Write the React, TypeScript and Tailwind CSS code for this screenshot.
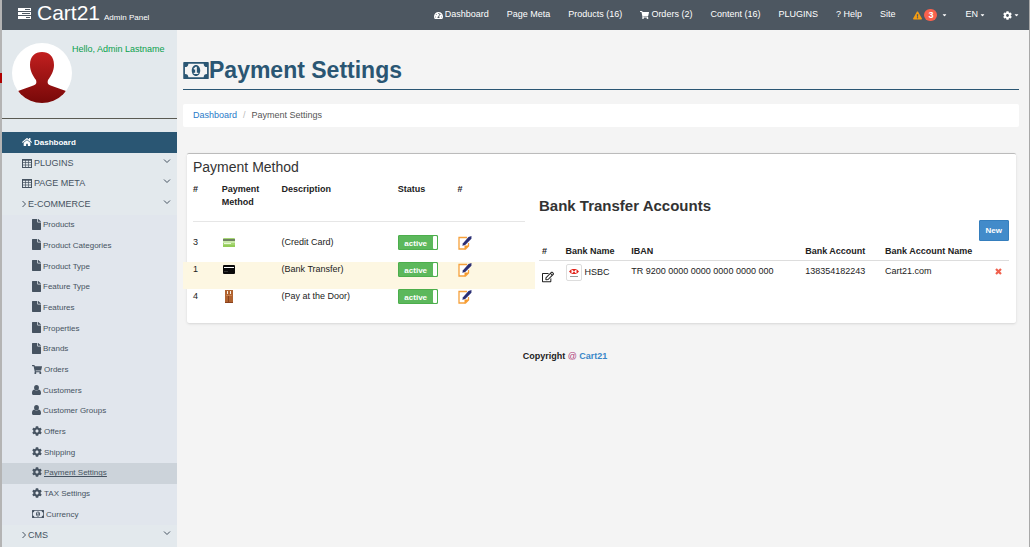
import React from 'react';
import {
  FaCaretDown,
  FaCog,
  FaExclamationTriangle,
  FaFile,
  FaHome,
  FaRegEdit,
  FaShoppingCart,
  FaTachometerAlt,
} from 'react-icons/fa';

type IconProps = { className?: string };

const ServerIcon = ({ className }: IconProps) => (
  <svg viewBox="0 0 13 11" className={className} fill="currentColor" aria-hidden="true">
    <path fillRule="evenodd" d="M0 0h13v3H0zM7 1v1h5V1zM0 4h13v3H0zM4 5v1h8V5zM0 8h13v3H0zM8 9v1h4V9z" />
  </svg>
);

const TableIcon = ({ className }: IconProps) => (
  <svg viewBox="0 0 10 9" className={className} fill="none" stroke="currentColor" strokeWidth="1" aria-hidden="true">
    <rect x="0.5" y="0.5" width="9" height="8" />
    <path strokeOpacity="0.7" d="M0 1.500h10M0 3.500h10M0 6h10M3.500 1v8M6.500 1v8" />
  </svg>
);

const MoneyIcon = ({ className }: IconProps) => (
  <svg viewBox="0 0 30 20" className={className} fill="currentColor" aria-hidden="true">
    <path
      fillRule="evenodd"
      d="M1 0h28a1 1 0 0 1 1 1v18a1 1 0 0 1-1 1H1a1 1 0 0 1-1-1V1a1 1 0 0 1 1-1zM6 2a4 4 0 0 1-4 4v8a4 4 0 0 1 4 4h18a4 4 0 0 1 4-4V6a4 4 0 0 1-4-4z"
    />
    <path fillRule="evenodd" d="M15 3.500c3 0 5 3 5 6.500s-2 6.500-5 6.500-5-3-5-6.500 2-6.500 5-6.500zM14.500 5.500L12 7.800l1.200 1.400.8-.7V12.500h-1.700V14h5.400v-1.500H16v-7z" />
  </svg>
);

const UserIcon = ({ className }: IconProps) => (
  <svg viewBox="0 0 9 10" className={className} fill="currentColor" aria-hidden="true">
    <ellipse cx="4.500" cy="2.700" rx="2.400" ry="2.700" />
    <path d="M2.200 4.600c1.300 1.400 3.300 1.400 4.600 0C8.400 4.800 9 6.300 9 8.200 9 9.300 8.400 10 7.500 10h-6C.6 10 0 9.300 0 8.200c0-1.900.6-3.400 2.200-3.600z" />
  </svg>
);

const ChevronIcon = ({ className }: IconProps) => (
  <svg viewBox="0 0 8 8" className={className} fill="none" stroke="currentColor" strokeWidth="1" aria-hidden="true">
    <path d="M1 2.500L4 5.500L7 2.500" />
  </svg>
);

const ArrowIcon = ({ className }: IconProps) => (
  <svg viewBox="0 0 4 8" className={className} fill="none" stroke="currentColor" strokeWidth="1" aria-hidden="true">
    <path d="M0.500 1L3.500 4L0.500 7" />
  </svg>
);

const CrossIcon = ({ className }: IconProps) => (
  <svg viewBox="0 0 7 7" className={className} fill="none" stroke="currentColor" strokeWidth="2.200" aria-hidden="true">
    <path d="M1 1L6 6M6 1L1 6" />
  </svg>
);

const GreenCardIcon = () => (
  <svg viewBox="0 0 12 9" className="w-3 h-[9px]" aria-hidden="true">
    <rect width="12" height="9" rx="1" fill="#a5d672" />
    <rect y="1" width="12" height="2" fill="#6f8460" />
    <rect y="3" width="12" height="2" fill="#c9e8a8" />
    <rect x="1" y="5" width="7" height="1" fill="#e9f8d8" />
    <rect y="7" width="12" height="2" fill="#93cc57" />
  </svg>
);

const BlackCardIcon = () => (
  <svg viewBox="0 0 12 9" className="w-3 h-[9px]" aria-hidden="true">
    <rect width="12" height="9" rx="1" fill="#0a0a0a" />
    <rect x="1" y="2" width="10" height="1" fill="#fff" />
    <rect x="1" y="6" width="4" height="1" fill="#333" />
  </svg>
);

const DoorIcon = () => (
  <svg viewBox="0 0 10 13" className="w-[10px] h-[13px] ml-px" aria-hidden="true">
    <path d="M1 0h8v13H1z" fill="#b0622f" />
    <path d="M3 1h1v3H3zM6 1h1v3H6z" fill="#fbeede" />
    <path d="M2 5h6v1H2z" fill="#c98250" />
    <path d="M4 6h1v6H4z" fill="#8a421d" />
    <path d="M1 12h8v1H1z" fill="#8a421d" />
  </svg>
);

const NoteIcon = () => (
  <svg viewBox="0 0 14 14" className="w-[14px] h-[14px]" aria-hidden="true">
    <path d="M9 1.500H1v11.500h6.500L10.500 10V7" fill="#fff" stroke="#f6a13c" strokeWidth="1.300" />
    <path d="M6.500 13.500V9.500h4.500z" fill="#f79a2b" />
    <path d="M4.300 9.800L5 7.200 10.500 1 13.500 0 13.400 2.800 7.200 9z" fill="#2b2f74" />
  </svg>
);

const BankLogo = () => (
  <svg viewBox="0 0 10 10" className="w-[10px] h-[10px]" aria-hidden="true">
    <path d="M2.500 1h5L5 3.500zM2.500 6h5L5 3.500zM2.500 1v5L0 3.500zM7.500 1v5L10 3.500z" fill="#e2231a" />
    <path d="M1 8h8v1H1z" fill="#999" />
  </svg>
);

const Avatar = () => (
  <svg viewBox="0 0 60 60" className="w-[60px] h-[60px] shrink-0" role="img" aria-label="Admin">
    <defs>
      <linearGradient id="body" x1="0" y1="0" x2="0" y2="1">
        <stop offset="0" stopColor="#c21f1f" />
        <stop offset="1" stopColor="#760808" />
      </linearGradient>
      <clipPath id="round">
        <circle cx="30" cy="30" r="30" />
      </clipPath>
    </defs>
    <circle cx="30" cy="30" r="30" fill="#fff" />
    <path
      clipPath="url(#round)"
      fill="url(#body)"
      d="M30 9c7 0 12 4 12 13 0 6-3 11-6 15-1 4 0 5 4 6l14 5c-3 6-11 13-24 13S9 54 6 48l14-5c4-1 5-2 4-6-3-4-6-9-6-15 0-9 5-13 12-13z"
    />
  </svg>
);

const subItems = [
  { label: 'Products', icon: 'file' },
  { label: 'Product Categories', icon: 'file' },
  { label: 'Product Type', icon: 'file' },
  { label: 'Feature Type', icon: 'file' },
  { label: 'Features', icon: 'file' },
  { label: 'Properties', icon: 'file' },
  { label: 'Brands', icon: 'file' },
  { label: 'Orders', icon: 'cart' },
  { label: 'Customers', icon: 'user' },
  { label: 'Customer Groups', icon: 'user' },
  { label: 'Offers', icon: 'cog' },
  { label: 'Shipping', icon: 'cog' },
  { label: 'Payment Settings', icon: 'cog', active: true },
  { label: 'TAX Settings', icon: 'cog' },
  { label: 'Currency', icon: 'money' },
];

const subIcons: Record<string, React.ReactNode> = {
  file: <FaFile className="w-[9px] h-[11px] mb-[2px]" preserveAspectRatio="none" />,
  cart: <FaShoppingCart className="w-[10px] h-[9px]" />,
  user: <UserIcon className="w-[9px] h-[10px] mb-[2px]" />,
  cog: <FaCog className="w-[10px] h-[10px] mb-[2px]" />,
  money: <MoneyIcon className="w-3 h-2 mb-[2px]" />,
};

const methods = [
  { id: 3, icon: <GreenCardIcon />, description: '(Credit Card)' },
  { id: 1, icon: <BlackCardIcon />, description: '(Bank Transfer)', highlight: true },
  { id: 4, icon: <DoorIcon />, description: '(Pay at the Door)' },
];

const Header = () => (
  <header className="flex items-center justify-between h-[30px] pl-4 pr-[10px] bg-[#4d5761] text-white">
    <a href="#" className="flex items-baseline -mt-1">
      <ServerIcon className="w-[13px] h-[11px] mr-[6px] self-center" />
      <span className="text-[21px] leading-6">Cart21</span>
      <span className="ml-1 text-[8px]">Admin Panel</span>
    </a>
    <nav className="flex items-center gap-[18px] text-[9px] whitespace-nowrap">
      <a href="#" className="flex items-center gap-[2px]">
        <FaTachometerAlt className="w-[9px] h-[9px]" />
        Dashboard
      </a>
      <a href="#">Page Meta</a>
      <a href="#">Products (16)</a>
      <a href="#" className="flex items-center gap-[2px]">
        <FaShoppingCart className="w-[9px] h-2" />
        Orders (2)
      </a>
      <a href="#">Content (16)</a>
      <a href="#">PLUGINS</a>
      <a href="#">? Help</a>
      <a href="#">Site</a>
      <button className="flex items-center gap-[2px]" aria-label="Alerts">
        <FaExclamationTriangle className="w-[9px] h-[9px] text-[#f39c12]" />
        <span className="px-1 rounded-full bg-[#f9614d] font-bold leading-3">3</span>
        <FaCaretDown className="w-[5px] h-[6px] ml-[3px]" />
      </button>
      <button className="flex items-center gap-[2px]">
        EN
        <FaCaretDown className="w-[5px] h-[6px]" />
      </button>
      <button className="flex items-center gap-[2px]" aria-label="Settings">
        <FaCog className="w-[9px] h-[9px]" />
        <FaCaretDown className="w-[5px] h-[6px]" />
      </button>
    </nav>
  </header>
);

const Sidebar = () => (
  <aside className="w-[175px] shrink-0 bg-[#e3e9ed] text-[#465361]">
    <div className="flex items-start h-[89px] pt-[13px] pl-[10px] border-b border-[#5a5a52]">
      <Avatar />
      <span className="text-[9px] leading-3 text-[#0aa04c] whitespace-nowrap">Hello, Admin Lastname</span>
    </div>
    <nav className="mt-[13px] text-[9px]">
      <a href="#" className="flex items-center gap-[2px] h-[21px] pl-5 bg-[#2a5673] text-white font-bold">
        <FaHome className="w-[10px] h-[10px] mb-px" />
        <span className="text-[8px]">Dashboard</span>
      </a>
      <a href="#" className="flex items-center h-[21px] pl-5 pr-[6px]">
        <TableIcon className="w-[10px] h-[9px] mb-px mr-[2px]" />
        PLUGINS
        <ChevronIcon className="w-2 h-2 mb-[6px] ml-auto" />
      </a>
      <a href="#" className="flex items-center h-5 pl-5 pr-[6px]">
        <TableIcon className="w-[10px] h-[9px] mb-px mr-[2px]" />
        PAGE META
        <ChevronIcon className="w-2 h-2 mb-[6px] ml-auto" />
      </a>
      <a href="#" className="flex items-center h-[21px] pl-5 pr-[6px]">
        <ArrowIcon className="w-1 h-2 mb-px mr-[2px]" />
        E-COMMERCE
        <ChevronIcon className="w-2 h-2 mb-[6px] ml-auto" />
      </a>
      <ul className="grid auto-rows-fr min-h-[310px] bg-[#e1e6ed] text-[8px]">
        {subItems.map((item) => (
          <li key={item.label} className={item.active ? 'flex bg-[#ccd3da] underline' : 'flex'}>
            <a href="#" className="flex flex-1 items-center gap-[2px] pl-[30px]">
              {subIcons[item.icon]}
              {item.label}
            </a>
          </li>
        ))}
      </ul>
      <a href="#" className="flex items-center h-[21px] pl-5 pr-[6px]">
        <ArrowIcon className="w-1 h-2 mb-px mr-[2px]" />
        CMS
        <ChevronIcon className="w-2 h-2 mb-[6px] ml-auto" />
      </a>
    </nav>
  </aside>
);

const PaymentMethods = () => (
  <div>
    <h2 className="pl-[10px] text-sm leading-[26px] text-[#333]">Payment Method</h2>
    <table className="w-full table-fixed text-left leading-[13px]">
      <colgroup>
        <col className="w-[11%]" />
        <col className="w-[17%]" />
        <col className="w-[33%]" />
        <col className="w-[17%]" />
        <col />
      </colgroup>
      <thead className="align-top">
        <tr>
          <th className="pt-[3px] pl-[10px]">#</th>
          <th className="pt-[3px] pb-3">Payment Method</th>
          <th className="pt-[3px]">Description</th>
          <th className="pt-[3px]">Status</th>
          <th className="pt-[3px]">#</th>
        </tr>
        <tr>
          <td colSpan={5} className="px-[10px] pb-[13px]">
            <hr className="border-[#e6e6e6]" />
          </td>
        </tr>
      </thead>
      <tbody className="align-top">
        {methods.map((method) => (
          <tr key={method.id} className={method.highlight ? 'h-[27px] bg-[#fdf7e2]' : 'h-[27px]'}>
            <td className="pt-px pl-[10px]">{method.id}</td>
            <td>
              <span className="flex items-center h-[15px] pl-[1px]">{method.icon}</span>
            </td>
            <td className="pt-px">{method.description}</td>
            <td>
              <button
                role="switch"
                aria-checked="true"
                className="flex w-10 h-[15px] rounded-[1px] border border-[#4cae4c] bg-[#5cb85c] text-[8px] font-bold text-white"
              >
                <span className="flex-1 leading-[15px]">active</span>
                <span className="w-1 h-[13px] bg-white rounded-[1px]" />
              </button>
            </td>
            <td>
              <button className="block pt-px" aria-label="Edit">
                <NoteIcon />
              </button>
            </td>
          </tr>
        ))}
      </tbody>
    </table>
  </div>
);

const BankAccounts = () => (
  <div className="pt-[42px] pl-1 pr-[7px]">
    <h2 className="text-[15px] leading-5 font-bold text-[#333]">Bank Transfer Accounts</h2>
    <div className="flex justify-end mt-1">
      <button className="h-[21px] px-[6px] rounded-[1px] border border-[#357ebd] bg-[#428bca] text-[8px] font-bold text-white">
        New
      </button>
    </div>
    <table className="w-full table-fixed text-left leading-[13px] whitespace-nowrap">
      <colgroup>
        <col className="w-[5%]" />
        <col className="w-[14%]" />
        <col className="w-[37%]" />
        <col className="w-[17%]" />
        <col className="w-[23%]" />
        <col />
      </colgroup>
      <thead>
        <tr className="border-b border-[#ddd]">
          <th className="pt-1 pb-[2px] pl-[3px]">#</th>
          <th className="pt-1 pb-[2px] pl-[3px]">Bank Name</th>
          <th className="pt-1 pb-[2px] pl-[3px]">IBAN</th>
          <th className="pt-1 pb-[2px] pl-[3px]">Bank Account</th>
          <th className="pt-1 pb-[2px] pl-[3px]">Bank Account Name</th>
          <th />
        </tr>
      </thead>
      <tbody className="align-top">
        <tr>
          <td className="pt-[10px] pl-[3px]">
            <button className="block" aria-label="Edit account">
              <FaRegEdit className="w-3 h-3" />
            </button>
          </td>
          <td className="pt-[3px] pl-[3px]">
            <span className="flex items-center gap-[3px]">
              <span className="flex items-center justify-center w-4 h-[17px] rounded-[2px] border border-[#ddd]">
                <BankLogo />
              </span>
              HSBC
            </span>
          </td>
          <td className="pt-1 pl-[3px]">TR 9200 0000 0000 0000 0000 000</td>
          <td className="pt-1 pl-[3px]">138354182243</td>
          <td className="pt-1 pl-[3px]">Cart21.com</td>
          <td className="pt-[7px]">
            <button className="block ml-[5px]" aria-label="Delete">
              <CrossIcon className="w-[7px] h-[7px] text-[#f0604d]" />
            </button>
          </td>
        </tr>
      </tbody>
    </table>
  </div>
);

export default function App() {
  return (
    <div className="relative flex flex-col min-h-screen border-l-2 border-r border-l-[#b4b4b4] border-r-[#a8a8a8] bg-[#f4f4f4] font-['Liberation_Sans',Arial,sans-serif] text-[9px] text-[#222]">
      <span className="absolute top-[73px] -left-[2px] w-[2px] h-[10px] bg-[#b00000]" />
      <Header />
      <div className="flex flex-1">
        <Sidebar />
        <main className="flex-1 min-w-0 pl-[6px] pr-[10px] pt-[25px]">
          <h1 className="flex items-center pb-1 border-b border-[#2a5673] text-[23px] leading-[30px] font-bold text-[#2a5673]">
            <MoneyIcon className="w-[26px] h-[17px]" />
            Payment Settings
          </h1>
          <nav className="flex gap-[6px] mt-[14px] px-[10px] py-[5px] rounded-[2px] bg-white leading-[13px]">
            <a href="#" className="text-[#2a7ac8]">
              Dashboard
            </a>
            <span className="text-[#bbb]">/</span>
            <span className="text-[#555]">Payment Settings</span>
          </nav>
          <section className="mt-[26px] ml-1 mr-[3px] pb-[7px] rounded-[2px] border-t border-[#bbb] bg-white shadow-sm">
            <div className="grid grid-cols-[352fr_481fr] -ml-1">
              <PaymentMethods />
              <BankAccounts />
            </div>
          </section>
          <footer className="mt-[27px] pr-[72px] text-center font-bold leading-[13px]">
            <span>Copyright </span>
            <span className="text-[#b0407c] font-normal">@</span> <a href="#" className="text-[#3a87c8]">Cart21</a>
          </footer>
        </main>
      </div>
    </div>
  );
}
